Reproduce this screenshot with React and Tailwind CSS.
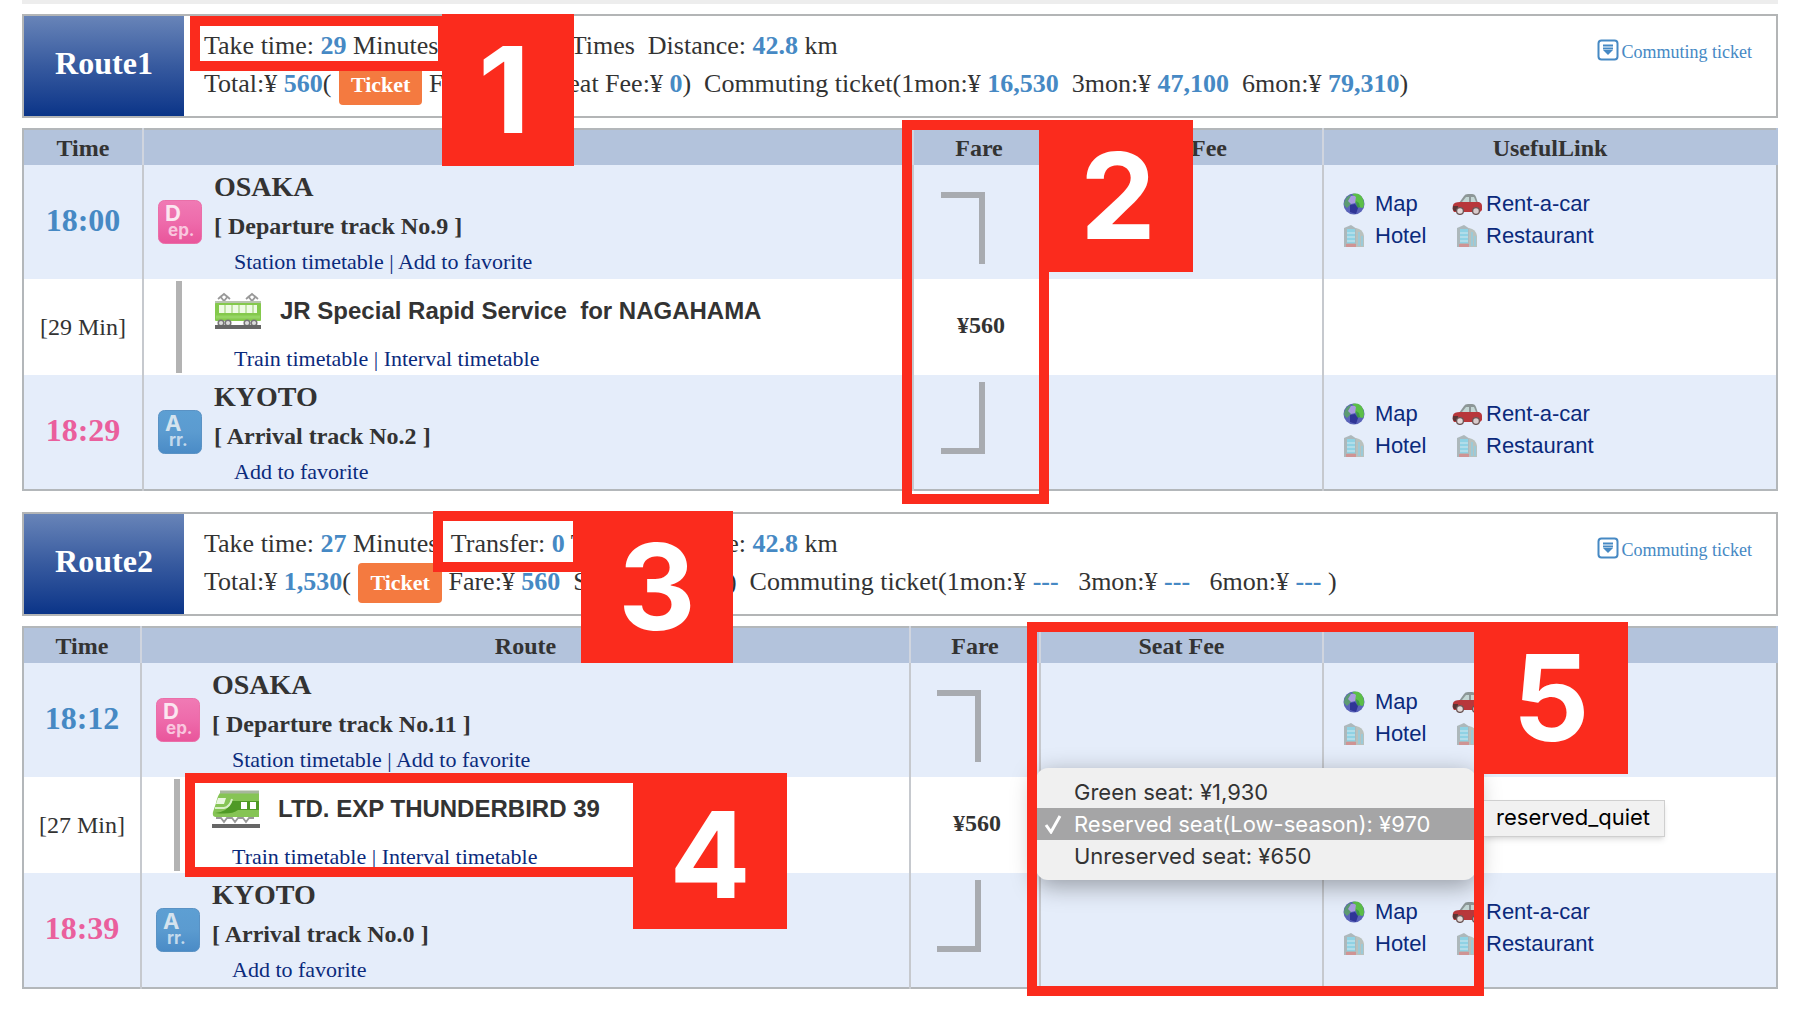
import React from "react";

const serif = "font-['Liberation_Serif',serif]";
const sans = "font-['Liberation_Sans',sans-serif]";

const N = ({ children }) => <b className="text-[#4689c4]">{children}</b>;

function StationBadge({ kind }) {
  const dep = kind === "dep";
  return (
    <svg viewBox="0 0 44 44" className="h-11 w-11" aria-hidden="true">
      <defs>
        <linearGradient id={"g" + kind} x1="0" y1="0" x2="0" y2="1">
          <stop offset="0" stopColor={dep ? "#f07ab4" : "#5d9fd3"} />
          <stop offset=".5" stopColor={dep ? "#ee6bab" : "#5b9bd0"} />
          <stop offset="1" stopColor={dep ? "#e9559b" : "#4a8bc6"} />
        </linearGradient>
      </defs>
      <rect x="0.5" y="0.5" width="43" height="43" rx="6" fill={"url(#g" + kind + ")"} stroke={dep ? "#ea6fa8" : "#5a92c4"} />
      <text x="7" y="21" fontSize="22" fontWeight="bold" fill={dep ? "#fbe6f0" : "#d5e3ee"} fontFamily="Inter">{dep ? "D" : "A"}</text>
      <text x={dep ? 10 : 11} y="36" fontSize="17" fontWeight="bold" fill={dep ? "#f9c6de" : "#c3daec"} fontFamily="Inter">{dep ? "ep." : "rr."}</text>
    </svg>
  );
}

function LocalTrain() {
  return (
    <svg viewBox="0 0 48 38" className="h-[38px] w-12" aria-hidden="true">
      <path d="M4 7 10 2l6 5M6 4l4 5 4-5M32 7l6-5 6 5M34 4l4 5 4-5" fill="none" stroke="#999" strokeWidth="1.8" />
      <rect x="1" y="9" width="46" height="3" fill="#b9c4b0" />
      <rect x="1" y="11" width="46" height="18" rx="1" fill="#84c94c" />
      <rect x="5" y="13" width="38" height="8" fill="#eefbe4" />
      <path d="M11 13v8M18 13v8M25 13v8M32 13v8M39 13v8" stroke="#b3dc91" strokeWidth="1.5" />
      <path d="M2 25h44" stroke="#95d563" strokeWidth="3" />
      {[7, 14, 33, 40].map((x) => <circle key={x} cx={x} cy="31" r="2.8" fill="#ddd" stroke="#777" strokeWidth="1.5" />)}
      <rect x="1" y="33" width="46" height="4" fill="#666" />
    </svg>
  );
}

function ExpressTrain() {
  return (
    <svg viewBox="0 0 48 38" className="h-[38px] w-12" aria-hidden="true">
      <path d="M9 2h38v25H4q-4 0-3-5l3-9Q6 4 9 2Z" fill="#86c455" />
      <path d="M8 2h39" stroke="#a7b79c" strokeWidth="3" />
      <path d="M6 8h8l-2 6H4Z" fill="#eaf7df" />
      <path d="M3 23q13-1 17-12h27v9H26q-6 5-23 3Z" fill="#4f9a25" />
      <path d="M3 18h9q6-1 8-9" stroke="#d9f0c6" strokeWidth="2" fill="none" />
      <rect x="29" y="12" width="6" height="7" fill="#fff" /><rect x="38" y="12" width="6" height="7" fill="#fff" />
      <path d="M4 28h5l3 4 3-4h5l3 4 3-4h5l3 4 3-4h5" fill="none" stroke="#999" strokeWidth="1.8" />
      <rect x="0" y="34" width="48" height="4" fill="#666" />
    </svg>
  );
}

function Globe() {
  return (
    <svg viewBox="0 0 22 22" className="h-[22px] w-[22px]" aria-hidden="true">
      <circle cx="11" cy="11" r="10.5" fill="#5a63b8" />
      <path d="M7 2Q1 5 1 12l3 3 4-4-2-4 3-3Z" fill="#5c9a72" />
      <path d="M9 1q8-2 11 5 2 5 0 9l-5-1-2-4-3-2 2-4Z" fill="#5cbf47" />
      <path d="M8 3q3-1 5 1l-1 6-4 1-3-3Z" fill="#a99be0" />
      <path d="M13 8l3 2 1 4-3 1Z" fill="#3f9a46" />
      <path d="M7 12l5-1 3 4-2 6-6-2Z" fill="#2f3596" />
    </svg>
  );
}

function Car() {
  return (
    <svg viewBox="0 0 30 22" className="h-[22px] w-[30px]" aria-hidden="true">
      <path d="M7 10 12 3q1-2 4-2h4q3 0 4 3l2 6Z" fill="#8d9797" />
      <path d="M10 9l4-5h3v5ZM19 4h3l2 5h-5Z" fill="#c3d6d4" />
      <path d="M1 12q1-3 7-3l19 0q3 1 3 4v4q-1 2-3 2H2q-2-2-1-7Z" fill="#b8373b" />
      <path d="M1 13h5v5H2q-2-2-1-5Z" fill="#5c3434" />
      <circle cx="8" cy="18" r="3.4" fill="#e4dada" stroke="#6b5555" strokeWidth="1.3" />
      <circle cx="24" cy="18" r="3.4" fill="#d8cccc" stroke="#6b5555" strokeWidth="1.3" />
    </svg>
  );
}

function Building() {
  return (
    <svg viewBox="0 0 22 24" className="h-6 w-[22px]" aria-hidden="true">
      <path d="M1 4 8 1l6 4v18H1Z" fill="#adb8bb" />
      <path d="M13 4q7 1 8 8v11h-8Z" fill="#b9c1bd" />
      <path d="M4 5h8v14H4Z" fill="#8fd2e4" />
      <path d="M4 9h8M4 13h8M4 17h8" stroke="#d3e8ee" strokeWidth="1" />
      <path d="M16 8v14M19 12v10" stroke="#93cde0" strokeWidth="1.5" />
      <path d="M3 20h10v3H3Z" fill="#cf9494" />
    </svg>
  );
}

function UsefulLinks() {
  const item = "flex items-center text-[#0b2a7c]";
  return (
    <div className={`grid grid-cols-[109px_auto] justify-start pb-1 pl-[19px] text-[22px] leading-8 ${sans}`}>
      <a href="#map" className={item}><span className="w-8"><Globe /></span>Map</a>
      <a href="#car" className={item}><span className="w-[34px]"><Car /></span>Rent-a-car</a>
      <a href="#hotel" className={item}><span className="w-8"><Building /></span>Hotel</a>
      <a href="#restaurant" className={item}><span className="w-[34px] pl-1"><Building /></span>Restaurant</a>
    </div>
  );
}

function CommutingLink() {
  return (
    <a href="#commuting" className="mt-[18px] mr-6 flex h-8 items-center gap-[3px] text-[18px] text-[#4689c4]">
      <svg viewBox="0 0 22 22" className="h-[22px] w-[22px]" aria-hidden="true">
        <rect x="1.5" y="1.5" width="19" height="19" rx="3" fill="#fff" stroke="#4689c4" strokeWidth="2" />
        <path d="M6 6.5h10M6 9.5h10" stroke="#4689c4" strokeWidth="1.8" />
        <path d="M6 11h10l-5 5Z" fill="#4689c4" />
      </svg>
      <span className="pt-1">Commuting ticket</span>
    </a>
  );
}

function Summary({ r }) {
  return (
    <section className="flex h-[104px] border-2 border-[#b3b5b6] bg-white">
      <h2 className="flex w-40 items-center justify-center bg-linear-to-b from-[#6884b8] via-[#375a9f] to-[#0a3488] pb-1.5 text-[32px] font-bold text-white">{r.name}</h2>
      <div className="flex-1 pt-[11px] pl-5 text-[26px] leading-[38px] whitespace-pre text-[#333]">
        <p>Take time: <N>{r.minutes}</N> Minutes  Transfer: <N>0</N> Times  Distance: <N>42.8</N> km</p>
        <p>
          Total:¥ <N>{r.total}</N>( <button className="ml-px h-10 rounded-[4px] bg-[#f47a40] px-3 align-baseline text-[22px] leading-10 font-bold text-white">Ticket</button> Fare:¥ <N>560</N>  Seat Fee:¥ <N>{r.seat}</N>)  Commuting ticket(1mon:¥ <N>{r.passes[0]}</N>{r.gap}  3mon:¥ <N>{r.passes[1]}</N>{r.gap}  6mon:¥ <N>{r.passes[2]}</N>{r.gap})
        </p>
      </div>
      <CommutingLink />
    </section>
  );
}

function Station({ kind, name, track, links }) {
  return (
    <div className="flex items-center">
      <span className="ml-[14px] w-14"><StationBadge kind={kind} /></span>
      <div className="pt-0.5">
        <p className="text-[28px] leading-10 font-bold">{name}</p>
        <p className="text-[24px] leading-[38px] font-bold">[ {track} ]</p>
        <p className="pl-5 text-[22px] leading-[34px] text-[#0b2a7c]">
          {links.map((l, i) => <React.Fragment key={l}>{i > 0 && " | "}<a href="#link">{l}</a></React.Fragment>)}
        </p>
      </div>
    </div>
  );
}

const td = "border-r-2 border-[#c6c9ce] p-0 last:border-r-[#b3b7ba]";

function Timetable({ r }) {
  return (
    <table className="mt-[10px] w-full table-fixed border-collapse border-2 border-[#b3b7ba] text-[#333]">
      <colgroup>
        <col className={r.cols[0]} /><col /><col className={r.cols[1]} /><col className={r.cols[2]} /><col className="w-[454px]" />
      </colgroup>
      <thead>
        <tr className="h-9 bg-[#b3c3dc] text-[24px] leading-8">
          {["Time", "Route", "Fare", "Seat Fee", "UsefulLink"].map((h) => (
            <th key={h} className="border-r-2 border-[#d0d5df] p-0 last:border-r-[#b3c3dc]">{h}</th>
          ))}
        </tr>
      </thead>
      <tbody>
        <tr className="h-[114px] bg-[#e5edfa]">
          <td className={`${td} pb-1 text-center text-[32px] font-bold text-[#4689c4]`}>{r.dep}</td>
          <td className={td}><Station kind="dep" name="OSAKA" track={r.depTrack} links={["Station timetable", "Add to favorite"]} /></td>
          <td className={td}><div className="mx-auto mt-3 h-[72px] w-11 -translate-x-4 border-t-6 border-r-6 border-[#a8abb0]" /></td>
          <td className={td} />
          <td className={td}><UsefulLinks /></td>
        </tr>
        <tr className="h-24 bg-white">
          <td className={`${td} text-center text-[24px]`}>[{r.minutes} Min]</td>
          <td className={td}>
            <div className="ml-8 flex h-[92px] border-l-6 border-[#b3b3b3] pl-8">
              <div>
                <div className="flex h-[60px] items-center gap-[18px]">
                  {r.train}
                  <span className={`text-[24px] font-bold whitespace-pre ${sans}`}>{r.service}</span>
                </div>
                <p className="pl-5 text-[22px] leading-9 text-[#0b2a7c]"><a href="#train">Train timetable</a> | <a href="#interval">Interval timetable</a></p>
              </div>
            </div>
          </td>
          <td className={`${td} pb-1 pl-1 text-center text-[24px] font-bold`}>¥560</td>
          <td className={td} />
          <td className={td} />
        </tr>
        <tr className="h-[114px] bg-[#e5edfa]">
          <td className={`${td} pb-1 text-center text-[32px] font-bold text-[#ea5f9d]`}>{r.arr}</td>
          <td className={td}><Station kind="arr" name="KYOTO" track={r.arrTrack} links={["Add to favorite"]} /></td>
          <td className={td}><div className="mx-auto mb-7 h-[72px] w-11 -translate-x-4 border-r-6 border-b-6 border-[#a8abb0]" /></td>
          <td className={td} />
          <td className={td}><UsefulLinks /></td>
        </tr>
      </tbody>
    </table>
  );
}

const routes = [
  { name: "Route1", minutes: 29, total: "560", seat: "0", passes: ["16,530", "47,100", "79,310"], gap: "", dep: "18:00", arr: "18:29", depTrack: "Departure track No.9", arrTrack: "Arrival track No.2", service: "JR Special Rapid Service  for NAGAHAMA", train: <LocalTrain />, cols: ["w-[120px]", "w-[132px]", "w-[278px]"] },
  { name: "Route2", minutes: 27, total: "1,530", seat: "970", passes: ["---", "---", "---"], gap: " ", dep: "18:12", arr: "18:39", depTrack: "Departure track No.11", arrTrack: "Arrival track No.0", service: "LTD. EXP THUNDERBIRD 39", train: <ExpressTrain />, cols: ["w-[118px]", "w-[130px]", "w-[283px]"] },
];

const Frame = ({ className }) => <div className={`pointer-events-none absolute border-10 border-[#fb2b1d] ${className}`} />;
const Tag = ({ className, children }) => (
  <div className={`absolute flex items-center justify-center bg-[#fb2b1d] font-['Inter',sans-serif] text-[120px] leading-none font-bold text-white ${className}`}>{children}</div>
);

function SeatMenu() {
  const item = "flex h-8 items-center pl-[38px]";
  return (
    <div role="listbox" aria-label="Seat type" className="absolute top-[256px] right-[302px] w-[440px] rounded-xl bg-[#f0f0f0] py-2 font-['Inter',sans-serif] text-[22px] text-[#333] shadow-[0_6px_24px_rgba(0,0,0,0.35)]">
      <div role="option" aria-selected="false" className={item}>Green seat: ¥1,930</div>
      <div role="option" aria-selected="true" className="flex h-8 items-center gap-3 bg-[#a5a5a6] pl-2 text-white">
        <svg viewBox="0 0 18 20" className="h-5 w-[18px]" aria-hidden="true"><path d="M2 11l5 7L16 2" fill="none" stroke="#fff" strokeWidth="3" /></svg>
        Reserved seat(Low-season): ¥970
      </div>
      <div role="option" aria-selected="false" className={item}>Unreserved seat: ¥650</div>
    </div>
  );
}

export default function App() {
  return (
    <main className={`min-h-screen bg-white pr-5 pl-[22px] ${serif}`}>
      <div className="mb-[10px] h-1 bg-[#ededed]" />
      <div className="relative">
        <Summary r={routes[0]} />
        <Timetable r={routes[0]} />
        <Frame className="top-[2px] left-[168px] h-[55px] w-[258px]" />
        <Tag className="top-0 left-[420px] h-[152px] w-[132px] pr-2">1</Tag>
        <Frame className="top-[106px] right-[729px] h-[384px] w-[147px]" />
        <Tag className="top-[106px] right-[585px] h-[152px] w-[154px] pl-1">2</Tag>
      </div>
      <div className="relative mt-[21px]">
        <Summary r={routes[1]} />
        <Timetable r={routes[1]} />
        <SeatMenu />
        <div className="absolute top-[288px] right-[113px] h-[37px] border border-[#cfcfcf] bg-[#f1f1f1] pr-[14px] pl-3 font-['Inter',sans-serif] text-[22px] leading-8 text-black shadow-md">reserved_quiet</div>
        <Frame className="-top-px left-[411px] h-[61px] w-[150px]" />
        <Tag className="-top-px left-[559px] h-[152px] w-[152px]">3</Tag>
        <Frame className="top-[261px] left-[163px] h-[104px] w-[458px]" />
        <Tag className="top-[261px] left-[611px] h-[156px] w-[154px] pt-2">4</Tag>
        <Frame className="top-[110px] right-[294px] h-[374px] w-[457px]" />
        <Tag className="top-[110px] right-[150px] h-[152px] w-[154px]">5</Tag>
      </div>
    </main>
  );
}
